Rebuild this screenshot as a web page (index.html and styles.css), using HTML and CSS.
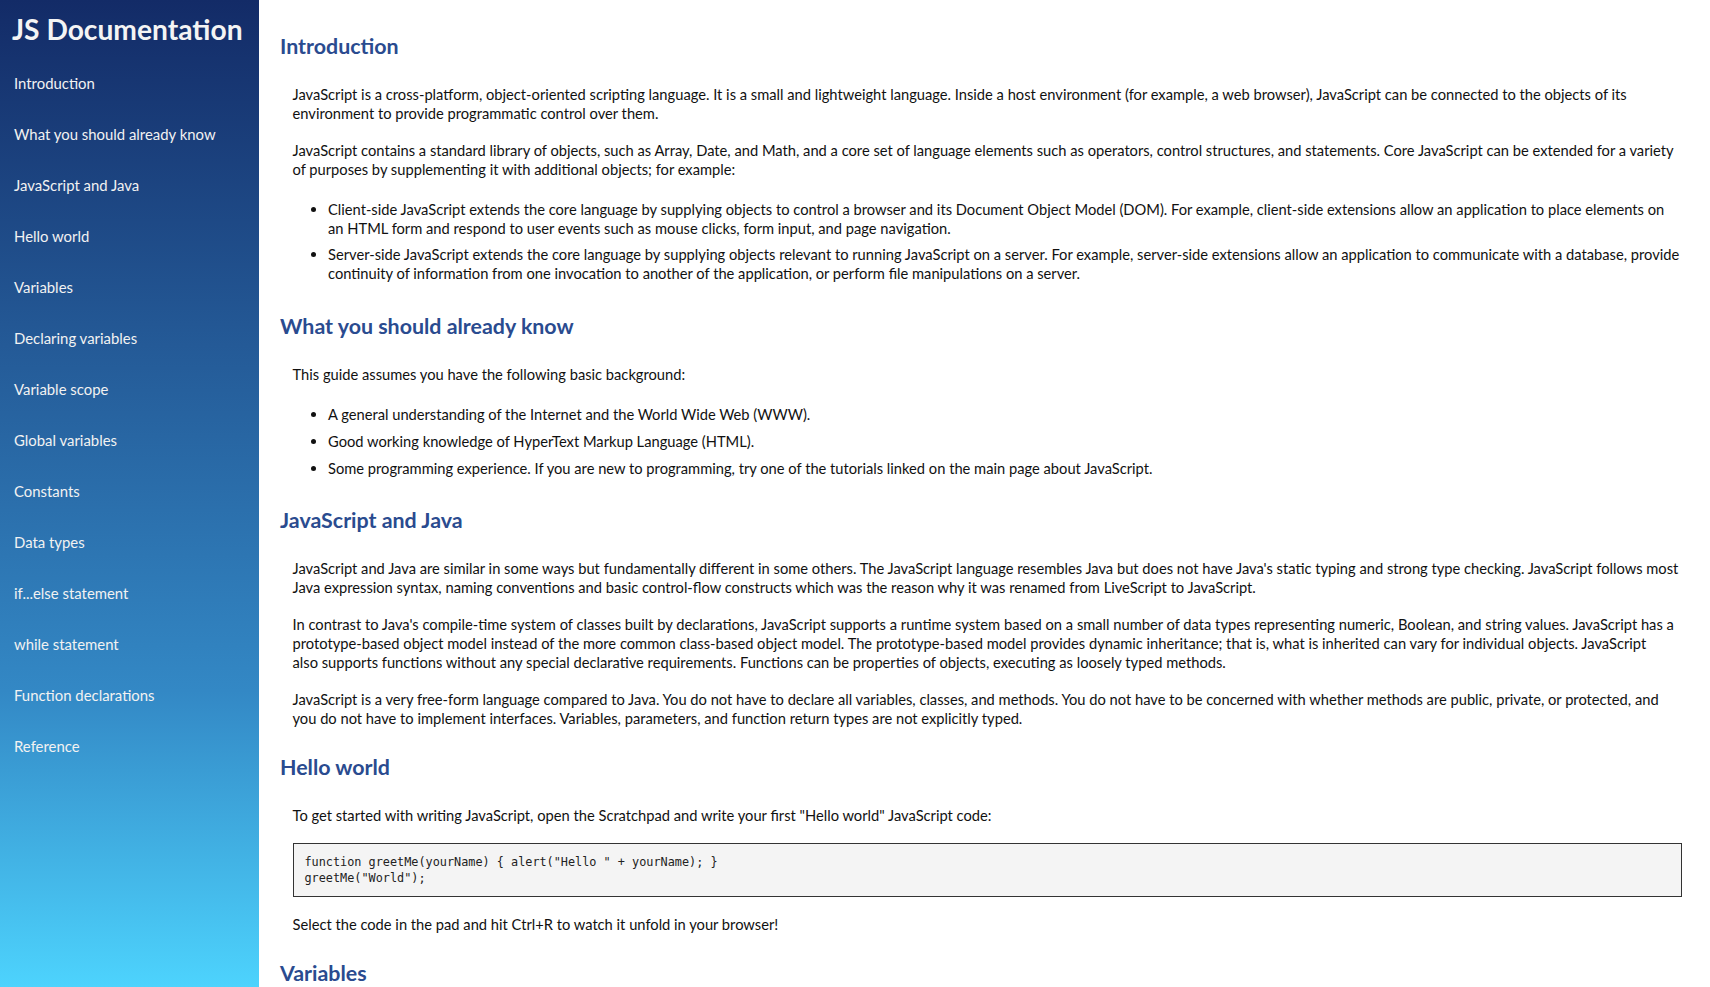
FILE: index.html
```html
<!DOCTYPE html>
<html lang="en">
<head>
<meta charset="utf-8">
<title>JS Documentation</title>
<link rel="stylesheet" href="styles.css">
</head>
<body>
<nav class="sidebar" id="navbar">
  <header class="sidebar-title">JS Documentation</header>
  <ul class="nav-list">
    <li><a class="nav-link" href="#Introduction">Introduction</a></li>
    <li><a class="nav-link" href="#What_you_should_already_know">What you should already know</a></li>
    <li><a class="nav-link" href="#JavaScript_and_Java">JavaScript and Java</a></li>
    <li><a class="nav-link" href="#Hello_world">Hello world</a></li>
    <li><a class="nav-link" href="#Variables">Variables</a></li>
    <li><a class="nav-link" href="#Declaring_variables">Declaring variables</a></li>
    <li><a class="nav-link" href="#Variable_scope">Variable scope</a></li>
    <li><a class="nav-link" href="#Global_variables">Global variables</a></li>
    <li><a class="nav-link" href="#Constants">Constants</a></li>
    <li><a class="nav-link" href="#Data_types">Data types</a></li>
    <li><a class="nav-link" href="#if...else_statement">if...else statement</a></li>
    <li><a class="nav-link" href="#while_statement">while statement</a></li>
    <li><a class="nav-link" href="#Function_declarations">Function declarations</a></li>
    <li><a class="nav-link" href="#Reference">Reference</a></li>
  </ul>
</nav>
<main class="main-doc" id="main-doc">
  <section class="main-section" id="Introduction">
    <h2 class="section-title">Introduction</h2>
    <p>JavaScript is a cross-platform, object-oriented scripting language. It is a small and lightweight language. Inside a host environment (for example, a web browser), JavaScript can be connected to the objects of its<br>environment to provide programmatic control over them.</p>
    <p>JavaScript contains a standard library of objects, such as Array, Date, and Math, and a core set of language elements such as operators, control structures, and statements. Core JavaScript can be extended for a variety<br>of purposes by supplementing it with additional objects; for example:</p>
    <ul class="bullets">
      <li>Client-side JavaScript extends the core language by supplying objects to control a browser and its Document Object Model (DOM). For example, client-side extensions allow an application to place elements on<br>an HTML form and respond to user events such as mouse clicks, form input, and page navigation.</li>
      <li>Server-side JavaScript extends the core language by supplying objects relevant to running JavaScript on a server. For example, server-side extensions allow an application to communicate with a database, provide<br>continuity of information from one invocation to another of the application, or perform file manipulations on a server.</li>
    </ul>
  </section>
  <section class="main-section" id="What_you_should_already_know">
    <h2 class="section-title">What you should already know</h2>
    <p>This guide assumes you have the following basic background:</p>
    <ul class="bullets">
      <li>A general understanding of the Internet and the World Wide Web (WWW).</li>
      <li>Good working knowledge of HyperText Markup Language (HTML).</li>
      <li>Some programming experience. If you are new to programming, try one of the tutorials linked on the main page about JavaScript.</li>
    </ul>
  </section>
  <section class="main-section" id="JavaScript_and_Java">
    <h2 class="section-title">JavaScript and Java</h2>
    <p>JavaScript and Java are similar in some ways but fundamentally different in some others. The JavaScript language resembles Java but does not have Java's static typing and strong type checking. JavaScript follows most<br>Java expression syntax, naming conventions and basic control-flow constructs which was the reason why it was renamed from LiveScript to JavaScript.</p>
    <p>In contrast to Java's compile-time system of classes built by declarations, JavaScript supports a runtime system based on a small number of data types representing numeric, Boolean, and string values. JavaScript has a<br>prototype-based object model instead of the more common class-based object model. The prototype-based model provides dynamic inheritance; that is, what is inherited can vary for individual objects. JavaScript<br>also supports functions without any special declarative requirements. Functions can be properties of objects, executing as loosely typed methods.</p>
    <p>JavaScript is a very free-form language compared to Java. You do not have to declare all variables, classes, and methods. You do not have to be concerned with whether methods are public, private, or protected, and<br>you do not have to implement interfaces. Variables, parameters, and function return types are not explicitly typed.</p>
  </section>
  <section class="main-section" id="Hello_world">
    <h2 class="section-title">Hello world</h2>
    <p>To get started with writing JavaScript, open the Scratchpad and write your first "Hello world" JavaScript code:</p>
    <pre class="code"><code>function greetMe(yourName) { alert("Hello " + yourName); }
greetMe("World");</code></pre>
    <p>Select the code in the pad and hit Ctrl+R to watch it unfold in your browser!</p>
  </section>
  <section class="main-section" id="Variables">
    <h2 class="section-title">Variables</h2>
    <p>You use variables as symbolic names for values in your application. The names of variables, called identifiers, conform to certain rules.</p>
    <p>A JavaScript identifier must start with a letter, underscore (_), or dollar sign ($); subsequent characters can also be digits (0-9). Because JavaScript is case sensitive, letters include the characters "A" through "Z" (uppercase) and the characters "a" through "z" (lowercase).</p>
  </section>
</main>
</body>
</html>
```
FILE: styles.css
```css
html, body {
  margin: 0;
  padding: 0;
}

body {
  display: flex;
  align-items: flex-start;
  font-family: Lato, "Liberation Sans", sans-serif;
  color: #111;
  background: #fff;
}

/* ---------- sidebar ---------- */
.sidebar {
  flex: 0 0 259px;
  width: 259px;
  height: 100vh;
  position: sticky;
  top: 0;
  background: linear-gradient(to bottom, #132b67 0%, #245a97 35%, #3388c5 70%, #4dd3fd 100%);
  color: #f2f2f2;
}

.sidebar-title {
  margin: 12px 0 0 12px;
  font-size: 28.2px;
  font-weight: 700;
  line-height: 34px;
  color: #f4f4f4;
  white-space: nowrap;
}

.nav-list {
  list-style: none;
  margin: 12px 0 0;
  padding: 0;
}

.nav-link {
  display: block;
  padding: 16px 0 16px 14px;
  font-size: 14.9px;
  line-height: 19px;
  color: #f2f2f2;
  text-decoration: none;
}

/* ---------- main ---------- */
.main-doc {
  flex: 1 1 auto;
  min-width: 0;
  padding: 6.5px 24px 0 21px;
}

.section-title {
  margin: 26.5px 0 26px;
  font-size: 21.4px;
  font-weight: 700;
  line-height: 26px;
  color: #2a4b8f;
}

.main-section p {
  margin: 18px 0 18px 12.5px;
  font-size: 14.7px;
  line-height: 18.9px;
}

.bullets {
  display: flex;
  flex-direction: column;
  gap: 8px;
  margin: 21px 0 29.8px 12.5px;
  padding-left: 35.5px;
  font-size: 14.7px;
  line-height: 18.9px;
}

.code {
  margin: 18px 4px 18px 12.5px;
  padding: 11px 11px 9px;
  border: 1px solid #333;
  background: #f4f4f4;
  font-family: "DejaVu Sans Mono", "Liberation Mono", monospace;
  font-size: 11.83px;
  line-height: 15.7px;
  color: #222;
  white-space: pre;
}
```
